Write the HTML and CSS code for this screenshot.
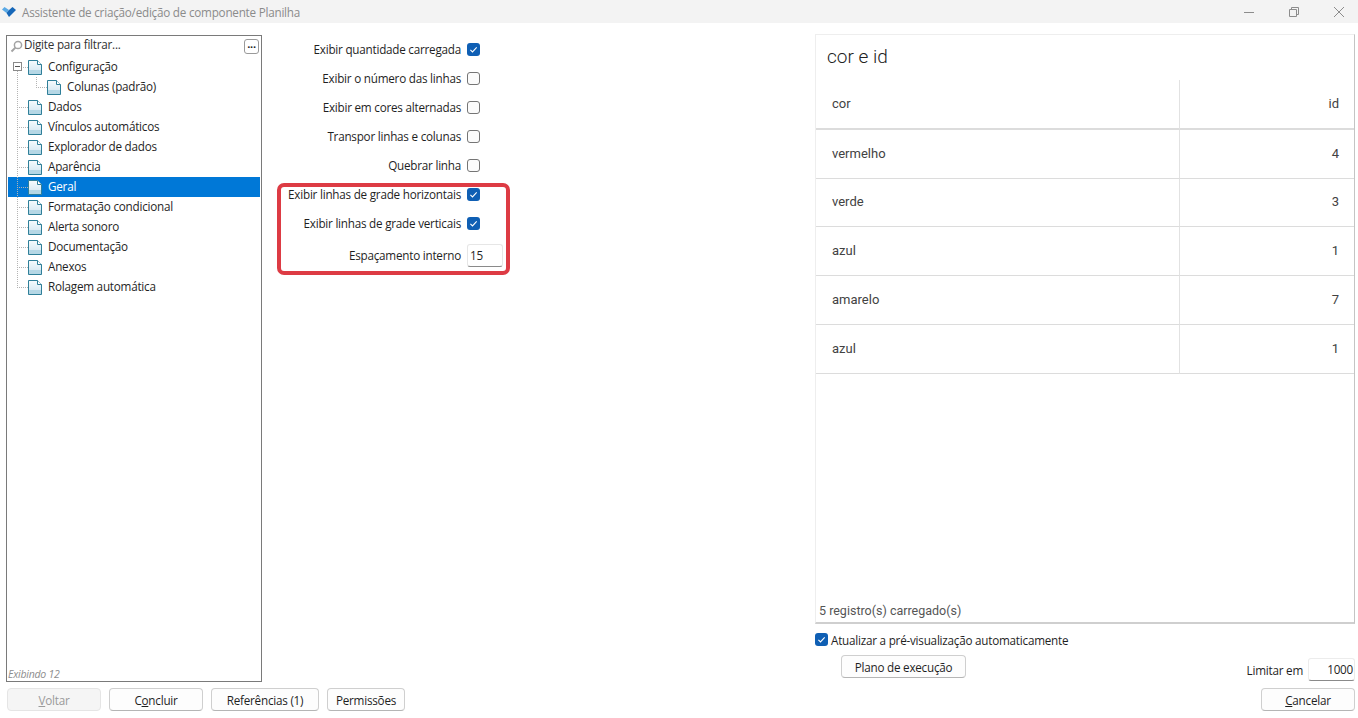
FILE: index.html
```html
<!DOCTYPE html>
<html lang="pt">
<head>
<meta charset="utf-8">
<title>Assistente</title>
<link rel="stylesheet" href="styles.css">
</head>
<body>
<svg class="defs" width="0" height="0" aria-hidden="true">
  <defs>
    <linearGradient id="pg" x1="0" y1="0" x2="0" y2="1">
      <stop offset="0" stop-color="#f6fbfd"/><stop offset="0.65" stop-color="#dcecf4"/><stop offset="0.7" stop-color="#b5d7e5"/><stop offset="1" stop-color="#b5d7e5"/>
    </linearGradient>
    <symbol id="doc" viewBox="0 0 14 15">
      <path d="M.5.5H9.5L13.5 4.5V14.5H.5Z" fill="url(#pg)" stroke="#2f7f99"/>
      <path d="M9.5 .5V4.5H13.5" fill="#fff" stroke="#2f7f99"/>
    </symbol>
    <symbol id="check" viewBox="0 0 13 13">
      <rect width="13" height="13" rx="3" fill="#0f5fb4"/>
      <path d="M3.4 6.8 5.5 8.9 9.7 4.4" fill="none" stroke="#fff" stroke-width="1.1"/>
    </symbol>
  </defs>
</svg>
<header class="titlebar">
  <svg class="logo" width="14" height="10" viewBox="0 0 14 10"><path d="M0 2.5 2.5 0 7 3 4.5 6Z" fill="#5aa9e6"/><path d="M7 3 10.5 0 14 3 7 10 4.5 6Z" fill="#1667b8"/></svg>
  <span class="wintitle">Assistente de criação/edição de componente Planilha</span>
  <div class="winbtns">
    <svg width="12" height="12" viewBox="0 0 12 12"><path d="M1 6.5H11" stroke="#8c8c8c"/></svg>
    <svg width="12" height="12" viewBox="0 0 12 12"><path d="M1.5 3.5H8.5V10.5H1.5ZM3.5 3.5V1.5H10.5V8.5H8.5" fill="none" stroke="#8c8c8c"/></svg>
    <svg width="12" height="12" viewBox="0 0 12 12"><path d="M1 1 11 11M11 1 1 11" stroke="#8c8c8c"/></svg>
  </div>
</header>
<main class="content">
  <section class="leftcol">
    <div class="tree">
      <div class="filter">
        <svg class="magnifier" width="13" height="13" viewBox="0 0 13 13"><circle cx="8" cy="5" r="3.6" fill="none" stroke="#a3a3a3" stroke-width="1.5"/><path d="M5.4 7.6 1.5 11.5" stroke="#a3a3a3" stroke-width="2"/></svg>
        <span class="filtertext">Digite para filtrar...</span>
        <span class="more">...</span>
      </div>
      <ul class="nodes">
        <li class="node"><span class="guide first"><i class="expander"></i></span><svg class="docicon"><use href="#doc"/></svg><span class="nodelabel">Configuração</span></li>
        <li class="node child"><span class="guide plain"></span><span class="guide sub"></span><svg class="docicon"><use href="#doc"/></svg><span class="nodelabel">Colunas (padrão)</span></li>
        <li class="node"><span class="guide"></span><svg class="docicon"><use href="#doc"/></svg><span class="nodelabel">Dados</span></li>
        <li class="node"><span class="guide"></span><svg class="docicon"><use href="#doc"/></svg><span class="nodelabel">Vínculos automáticos</span></li>
        <li class="node"><span class="guide"></span><svg class="docicon"><use href="#doc"/></svg><span class="nodelabel">Explorador de dados</span></li>
        <li class="node"><span class="guide"></span><svg class="docicon"><use href="#doc"/></svg><span class="nodelabel">Aparência</span></li>
        <li class="node selected"><span class="guide"></span><svg class="docicon"><use href="#doc"/></svg><span class="nodelabel">Geral</span></li>
        <li class="node"><span class="guide"></span><svg class="docicon"><use href="#doc"/></svg><span class="nodelabel">Formatação condicional</span></li>
        <li class="node"><span class="guide"></span><svg class="docicon"><use href="#doc"/></svg><span class="nodelabel">Alerta sonoro</span></li>
        <li class="node"><span class="guide"></span><svg class="docicon"><use href="#doc"/></svg><span class="nodelabel">Documentação</span></li>
        <li class="node"><span class="guide"></span><svg class="docicon"><use href="#doc"/></svg><span class="nodelabel">Anexos</span></li>
        <li class="node"><span class="guide last"></span><svg class="docicon"><use href="#doc"/></svg><span class="nodelabel">Rolagem automática</span></li>
      </ul>
      <div class="showing">Exibindo 12</div>
    </div>
    <div class="actions">
      <button class="btn disabled w94"><u>V</u>oltar</button>
      <button class="btn w94">C<u>o</u>ncluir</button>
      <button class="btn w108">Referências (1)</button>
      <button class="btn w78">Permissões</button>
    </div>
  </section>

  <section class="options">
    <div class="optrow"><span class="optlabel">Exibir quantidade carregada</span><svg class="cb"><use href="#check"/></svg></div>
    <div class="optrow"><span class="optlabel">Exibir o número das linhas</span><span class="cb empty"></span></div>
    <div class="optrow"><span class="optlabel">Exibir em cores alternadas</span><span class="cb empty"></span></div>
    <div class="optrow"><span class="optlabel">Transpor linhas e colunas</span><span class="cb empty"></span></div>
    <div class="optrow"><span class="optlabel">Quebrar linha</span><span class="cb empty"></span></div>
    <div class="optrow"><span class="optlabel">Exibir linhas de grade horizontais</span><svg class="cb"><use href="#check"/></svg></div>
    <div class="optrow"><span class="optlabel">Exibir linhas de grade verticais</span><svg class="cb"><use href="#check"/></svg></div>
    <div class="optrow lastopt"><span class="optlabel">Espaçamento interno</span><span class="numinput">15</span></div>
    <div class="highlight"></div>
  </section>

  <section class="rightcol">
    <div class="preview">
      <h1 class="ptitle">cor e id</h1>
      <div class="ptable">
        <div class="pcell phead">cor</div><div class="pcell phead num">id</div>
        <div class="pcell">vermelho</div><div class="pcell num">4</div>
        <div class="pcell">verde</div><div class="pcell num">3</div>
        <div class="pcell">azul</div><div class="pcell num">1</div>
        <div class="pcell">amarelo</div><div class="pcell num">7</div>
        <div class="pcell">azul</div><div class="pcell num">1</div>
      </div>
      <div class="records">5 registro(s) carregado(s)</div>
    </div>
    <div class="auto"><svg class="cb"><use href="#check"/></svg><span>Atualizar a pré-visualização automaticamente</span></div>
    <div class="planrow">
      <button class="btn plan">Plano de execução</button>
      <div class="limit"><span>Limitar em</span><span class="limitinput">1000</span></div>
    </div>
    <div class="cancelrow"><button class="btn w94"><u>C</u>ancelar</button></div>
  </section>
</main>
</body>
</html>
```
FILE: styles.css
```css
* { box-sizing: border-box; }
html, body { margin: 0; padding: 0; }
body {
  width: 1358px; height: 718px; overflow: hidden; background: #fff;
  font-family: "Open Sans", "Noto Sans", sans-serif; font-size: 11.7px; letter-spacing: -0.23px; color: #1f1f1f;
  display: flex; flex-direction: column;
}
.defs { position: absolute; }
.titlebar { height: 23px; background: #f3f3f3; display: flex; align-items: center; flex: none; }
.logo { margin-left: 2px; margin-right: 6px; }
.wintitle { color: #8b8b8b; flex: 1; }
.winbtns { display: flex; gap: 33px; margin-right: 13px; align-items: center; }
.content { flex: 1; display: flex; min-height: 0; }
.leftcol { width: 262px; padding: 12px 0 0 6px; flex: none; }
.tree { height: 647px; border: 1px solid #7a7a7a; display: flex; flex-direction: column; }
.filter { height: 21px; display: flex; align-items: center; padding: 0 2px 0 3px; flex: none; }
.magnifier { flex: none; }
.filtertext { margin-left: 1px; flex: 1; color: #333; padding-bottom: 5px; }
.more { width: 15px; height: 15px; border: 1px solid #9a9a9a; border-radius: 3px; font-weight: 700; line-height: 8px; text-align: center; font-size: 11px; background: #fff; }
.nodes { list-style: none; margin: 0; padding: 0 1px; flex: 1; }
.node { height: 20px; display: flex; align-items: center; white-space: nowrap; }
.guide {
  width: 11px; height: 20px; flex: none; margin-left: 9px; position: relative;
  background-image: repeating-linear-gradient(to bottom, #b4b4b4 0 1px, transparent 1px 2px), repeating-linear-gradient(to right, #b4b4b4 0 1px, transparent 1px 2px);
  background-size: 1px 100%, 11px 1px;
  background-position: 0 0, 0 10px;
  background-repeat: no-repeat;
}
.guide.first { background-size: 1px 50%, 11px 1px; background-position: 0 100%, 0 10px; }
.guide.last { background-size: 1px 50%, 11px 1px; background-position: 0 0, 0 10px; }
.guide.plain { background-size: 1px 100%, 0 0; width: 19px; }
.guide.sub { margin-left: 0; width: 11px; background-size: 1px 50%, 11px 1px; background-position: 0 0, 0 10px; }
.expander { position: absolute; left: -4px; top: 5px; width: 9px; height: 9px; border: 1px solid #8a8a8a; background: linear-gradient(to bottom, #fff 0 3px, #555 3px 4px, #fff 4px); background-size: 5px 100%; background-position: center; background-repeat: no-repeat; background-color: #fff; }
.docicon { width: 14px; height: 15px; flex: none; }
.nodelabel { margin-left: 6px; padding-bottom: 2px; }
.selected { background: #0078d7; color: #fff; }
.showing { height: 12px; margin: 0 0 1px 1px; font-size: 10.5px; font-style: italic; color: #8d8d8d; line-height: 12px; }
.actions { display: flex; gap: 8px; margin-top: 6px; padding-left: 1px; }
.btn {
  height: 23px; background: #fdfdfd; border: 1px solid #cfcfcf; border-bottom-color: #b5b5b5; border-radius: 4px;
  font: inherit; letter-spacing: inherit; color: #1f1f1f; padding: 0; flex: none;
}
.disabled { background: #f5f5f5; border-color: #e5e5e5; color: #9a9a9a; }
.w94 { width: 94px; }
.w108 { width: 108px; }
.w78 { width: 78px; }
.options { width: 553px; flex: none; padding-top: 12px; position: relative; }
.optrow { height: 29px; display: flex; align-items: center; }
.optlabel { width: 199px; text-align: right; white-space: nowrap; padding-bottom: 1px; }
.cb { width: 13px; height: 13px; margin-left: 6px; flex: none; display: block; }
.cb.empty { border: 1px solid #757575; border-radius: 3px; background: #fbfbfb; }
.lastopt { margin-top: 3px; }
.numinput { width: 36px; height: 23px; margin-left: 6px; border: 1px solid #e6e6e6; border-bottom-color: #8a8a8a; border-radius: 3px; padding: 0 2px; line-height: 21px; }
.highlight { position: absolute; left: 15px; top: 160px; width: 233px; height: 92px; border: 4px solid #dd3b44; border-radius: 7px; }
.rightcol { flex: 1; padding: 11px 3px 0 0; min-width: 0; }
.preview { height: 590px; border: 1px solid #eeeeee; border-bottom: 2px solid #cfcfcf; border-right-color: #c4c4c4; display: flex; flex-direction: column; font-family: Roboto, sans-serif; font-size: 13px; letter-spacing: 0; color: #424242; }
.ptitle { height: 45px; margin: 0; padding: 10px 0 0 11px; font-weight: 300; font-size: 19px; line-height: 24px; color: #222; flex: none; }
.ptable { display: grid; grid-template-columns: 364px 1fr; grid-template-rows: 50px 49px 48px 49px 49px 49px; flex: none; }
.pcell { border-bottom: 1px solid #dcdcdc; display: flex; align-items: center; padding: 0 15px 2px 16px; }
.pcell:nth-child(odd) { border-right: 1px solid #e2e2e2; }
.phead { border-bottom: 2px solid #dcdcdc; }
.num { justify-content: flex-end; }
.records { margin-top: auto; height: 22px; line-height: 22px; padding-left: 3px; color: #555; font-size: 12.5px; }
.auto { display: flex; align-items: center; gap: 3px; margin-top: 8px; height: 15px; }
.auto .cb { margin-left: 0; }
.planrow { display: flex; justify-content: space-between; align-items: flex-start; margin-top: 8px; height: 26px; }
.plan { width: 125px; margin-left: 26px; }
.limit { display: flex; align-items: center; gap: 5px; margin-top: 3px; }
.limitinput { width: 47px; height: 23px; border: 1px solid #ececec; border-bottom-color: #8a8a8a; border-radius: 3px; text-align: right; padding-right: 1px; line-height: 21px; }
.cancelrow { display: flex; justify-content: flex-end; margin-top: 7px; }
```
